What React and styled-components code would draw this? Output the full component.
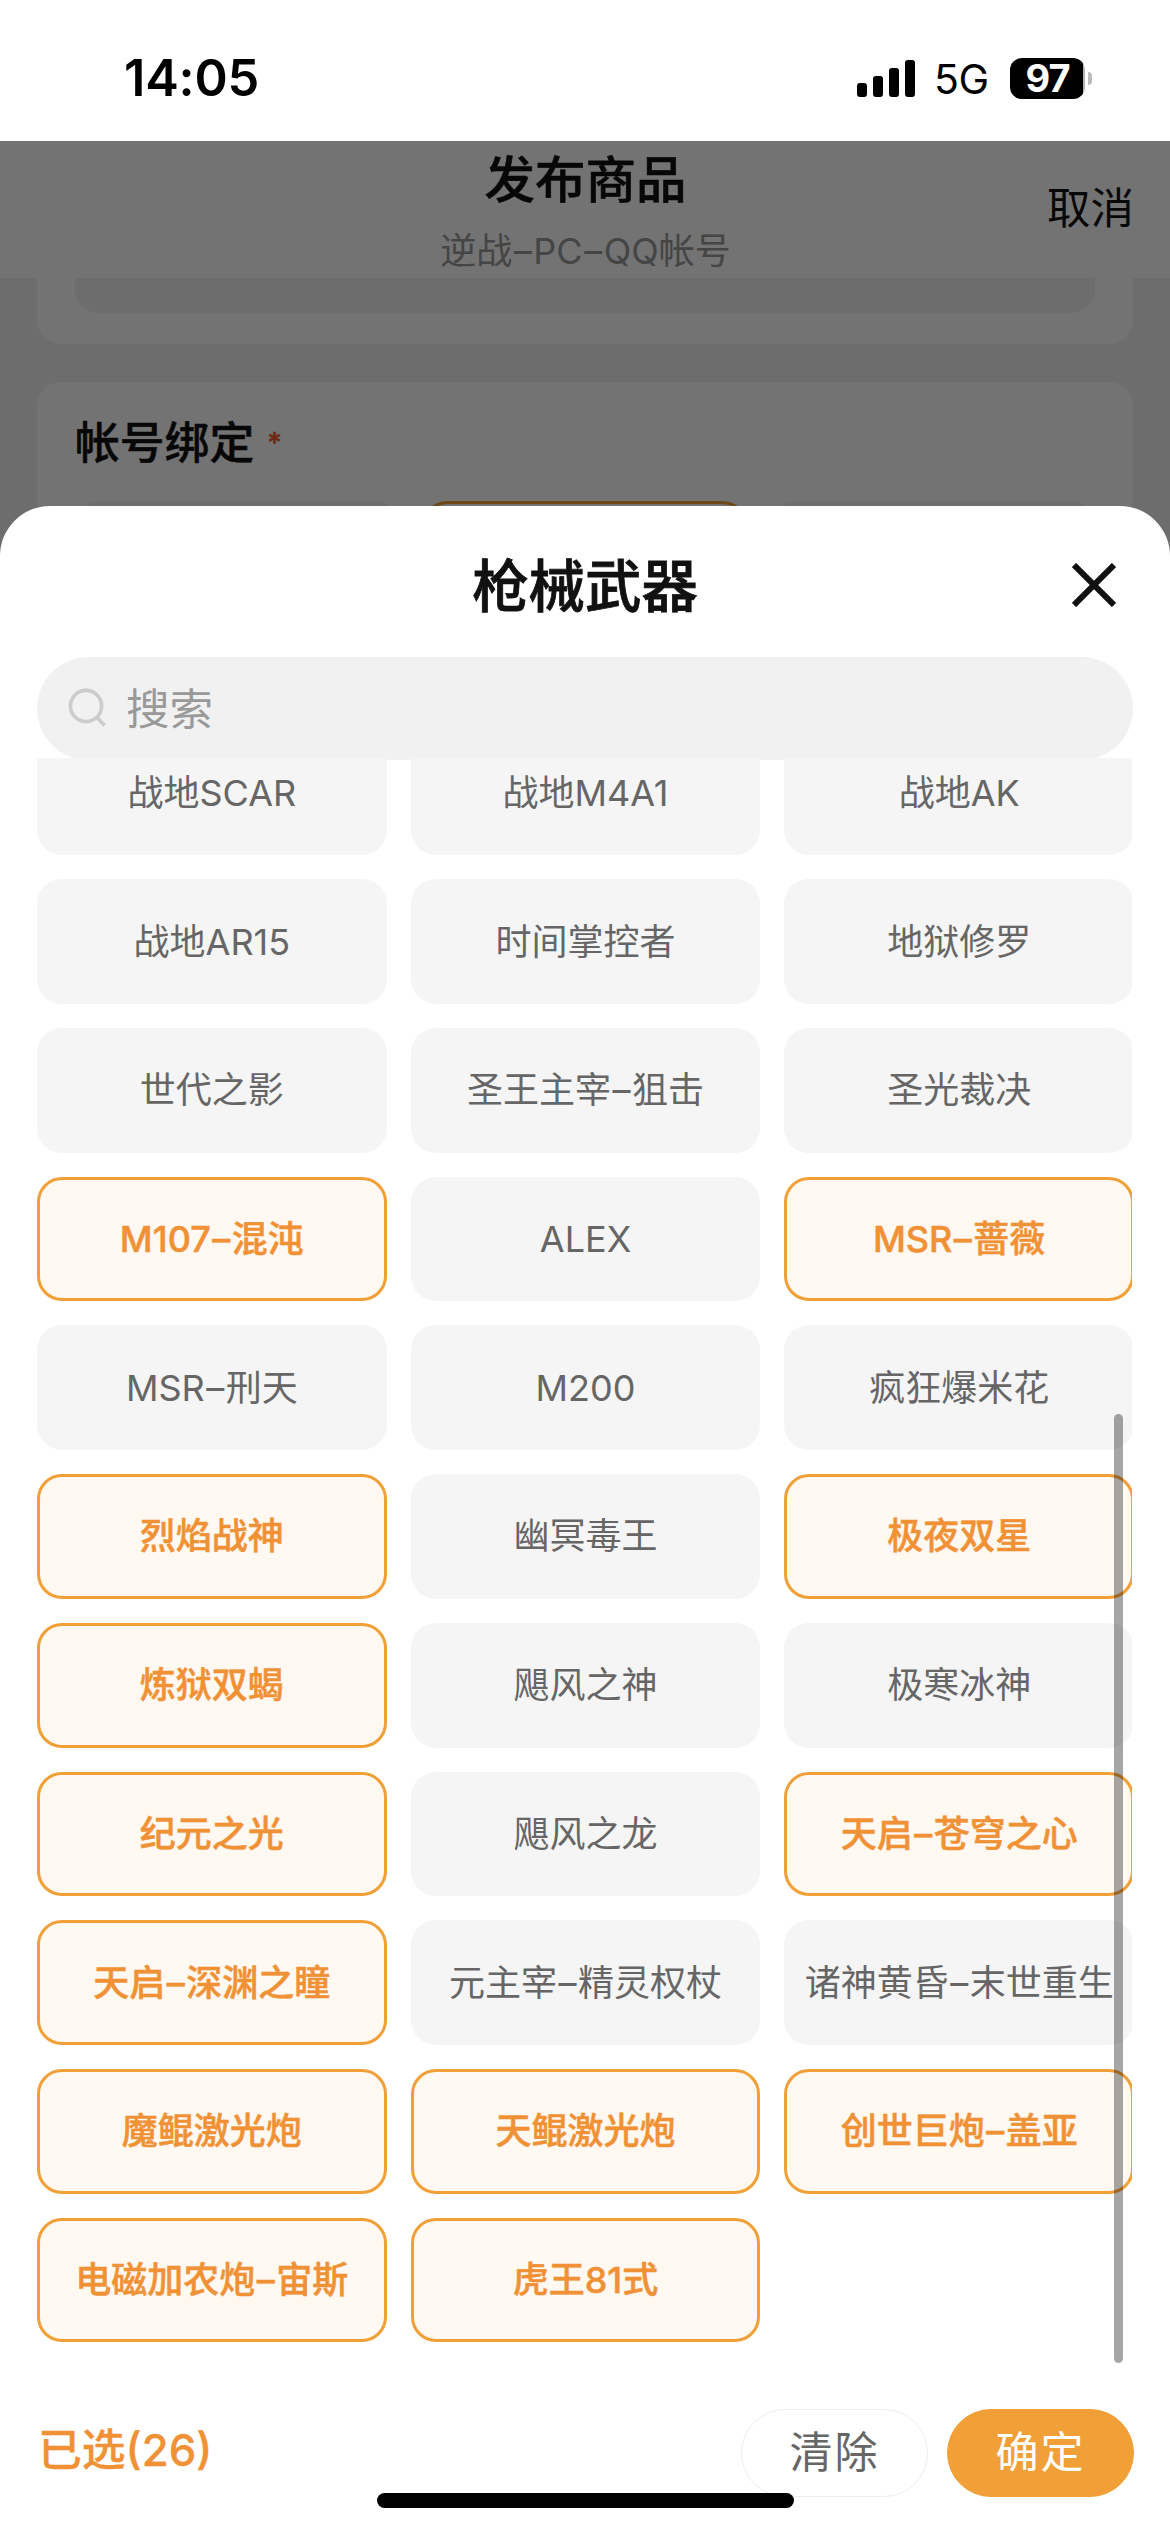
import React, { useState } from 'react';
import styled, { createGlobalStyle, css } from 'styled-components';

const GlobalStyle = createGlobalStyle`
  * { box-sizing: border-box; }
  html, body { margin: 0; padding: 0; background: #fff; }
  body { font-family: Inter, "Noto Sans CJK SC", sans-serif; }
  button { font: inherit; border: 0; background: none; padding: 0; }
`;

const stroke = (w) => css`-webkit-text-stroke: ${w}px currentColor;`;

const Phone = styled.div`
  position: relative;
  width: 1170px;
  height: 2532px;
  overflow: hidden;
  background: #fff;
  display: flex;
  flex-direction: column;
`;

const StatusBar = styled.header`
  flex: none;
  height: 141px;
  padding: 15px 78px 0 124px;
  display: flex;
  align-items: center;
  justify-content: space-between;
  color: #000;
`;

const Time = styled.span`
  font-size: 50.5px;
  font-weight: 600;
  letter-spacing: -0.2px;
  line-height: 60px;
`;

const StatusRight = styled.div`
  display: flex;
  align-items: center;
`;

const Network = styled.span`
  margin-left: 19px;
  width: 56px;
  font-size: 41px;
  line-height: 44px;
  letter-spacing: -0.5px;
  padding-top: 2px;
`;

const Battery = styled.span`
  margin-left: 20px;
  width: 75px;
  height: 41px;
  border-radius: 12px;
  background: linear-gradient(to right, #000 73px, #b3b3b3 73px);
  color: #fff;
  font-size: 38px;
  font-weight: 700;
  line-height: 41px;
  letter-spacing: -1px;
  text-align: center;
`;

const BatteryCap = styled.span`
  margin-left: 3px;
  width: 4px;
  height: 13px;
  border-radius: 0 4px 4px 0;
  background: #bbb;
`;

const Page = styled.main`
  position: relative;
  flex: 1;
  background: #f1f1f1;
`;

const PageHeader = styled.div`
  height: 137px;
  padding: 0 36px 0 37px;
  background: #fff;
  display: grid;
  grid-template-columns: 1fr auto 1fr;
  align-items: center;
`;

const Heading = styled.div`
  grid-column: 2;
  display: flex;
  flex-direction: column;
  align-items: center;
  padding-top: 3px;
`;

const PageTitle = styled.h1`
  margin: 0;
  font-size: 50.5px;
  font-weight: 500;
  line-height: 72px;
  color: #111;
  ${stroke(0.6)}
`;

const PageSubtitle = styled.span`
  font-size: 36px;
  line-height: 71px;
  height: 65px;
  color: #999;
`;

const Cancel = styled.button`
  justify-self: end;
  margin-top: -6px;
  font-size: 43.5px;
  line-height: 60px;
  color: #111;
`;

const Card = styled.section`
  margin: 0 37px 38px;
  padding: 0 38px 31px;
  background: #fff;
  border-radius: ${(p) => (p.$cut ? '0 0 24px 24px' : '24px')};
`;

const Field = styled.div`
  height: 35px;
  border-radius: 0 0 24px 24px;
  background: #f1f1f1;
`;

const CardTitle = styled.h2`
  margin: 0;
  height: 119px;
  padding-top: 2px;
  display: flex;
  align-items: center;
  font-size: 44.8px;
  line-height: 60px;
  font-weight: 500;
  color: #111;
  ${stroke(0.5)}
`;

const Required = styled.span`
  margin-left: 13px;
  font-size: 28px;
  color: #f2582b;
`;

const Options = styled.div`
  display: grid;
  grid-template-columns: repeat(3, 1fr);
  gap: 24px;
`;

const Option = styled.div`
  height: 125px;
  border-radius: 24px;
  background: ${(p) => (p.$on ? '#fff9f1' : '#f4f4f4')};
  border: 3px solid ${(p) => (p.$on ? '#f19f37' : 'transparent')};
`;

const Backdrop = styled.div`
  position: absolute;
  inset: 0;
  background: rgba(0, 0, 0, 0.55);
`;

const Sheet = styled.div`
  position: absolute;
  left: 0;
  right: 0;
  top: 506px;
  bottom: 0;
  display: flex;
  flex-direction: column;
  background: #fff;
  border-radius: 50px 50px 0 0;
`;

const SheetHeader = styled.div`
  flex: none;
  height: 151px;
  padding: 0 54px 0 37px;
  display: grid;
  grid-template-columns: 1fr auto 1fr;
  align-items: center;
`;

const SheetTitle = styled.h2`
  grid-column: 2;
  margin: 11px -17px 0 0;
  font-size: 56.4px;
  font-weight: 500;
  line-height: 80px;
  color: #111;
  ${stroke(0.8)}
`;

const Close = styled.button`
  justify-self: end;
  display: flex;
  margin-top: 6px;
`;

const Search = styled.label`
  flex: none;
  height: 103px;
  margin: 0 37px;
  padding: 0 31px 2px;
  border-radius: 52px;
  background: #f1f1f1;
  display: flex;
  align-items: center;
  gap: 20px;
  font-size: 43.5px;
  line-height: 60px;
  color: #999;
`;

const SearchText = styled.span`
  padding-top: 2px;
`;

const ListViewport = styled.div`
  position: relative;
  flex: none;
  height: 1607px;
  margin: -2px 38px 0 37px;
  overflow: hidden;
  display: flex;
  flex-direction: column;
`;

const Grid = styled.div`
  flex: none;
  width: 1097px;
  margin-top: -27.3px;
  display: grid;
  grid-template-columns: repeat(3, 1fr);
  grid-auto-rows: 124.7px;
  gap: 24px;
`;

const Chip = styled.button`
  border-radius: 25px;
  border: 3px solid ${(p) => (p.$on ? '#f19f37' : 'transparent')};
  background: ${(p) => (p.$on ? '#fff9f1' : '#f5f5f5')} border-box;
  color: ${(p) => (p.$on ? '#f19135' : '#666')};
  font-size: 36px;
  line-height: 44px;
  font-weight: ${(p) => (p.$on ? 500 : 400)};
  white-space: nowrap;
  display: flex;
  align-items: center;
  justify-content: center;
  ${(p) => p.$on && stroke(0.5)}
`;

const Dash = styled.span`
  margin: 0 1.5px;
`;

const Thumb = styled.div`
  position: absolute;
  right: 9px;
  top: 656px;
  width: 9px;
  height: 949px;
  border-radius: 5px;
  background: rgba(0, 0, 0, 0.35);
`;

const Footer = styled.footer`
  flex: none;
  margin-top: 44px;
  height: 88px;
  padding: 0 36px 0 38px;
  display: flex;
  align-items: center;
  gap: 19px;
`;

const Count = styled.span`
  flex: 1;
  padding-bottom: 4px;
  font-size: 43.8px;
  line-height: 60px;
  font-weight: 500;
  color: #f19135;
  ${stroke(0.3)}
`;

const Action = styled.button`
  width: 187px;
  height: 88px;
  padding-bottom: 3px;
  line-height: 60px;
  border-radius: 44px;
  border: 1px solid ${(p) => (p.$primary ? '#f19f37' : '#eee')};
  background: ${(p) => (p.$primary ? '#f19f37' : '#fff')};
  color: ${(p) => (p.$primary ? '#fff' : '#666')};
  font-size: 43px;
  letter-spacing: 2px;
`;

const HomeIndicator = styled.div`
  position: absolute;
  left: 377px;
  bottom: 24px;
  width: 417px;
  height: 15px;
  border-radius: 8px;
  background: #000;
`;

const WEAPONS = [
  ['战地SCAR'], ['战地M4A1'], ['战地AK'],
  ['战地AR15'], ['时间掌控者'], ['地狱修罗'],
  ['世代之影'], ['圣王主宰–狙击'], ['圣光裁决'],
  ['M107–混沌', 1], ['ALEX'], ['MSR–蔷薇', 1],
  ['MSR–刑天'], ['M200'], ['疯狂爆米花'],
  ['烈焰战神', 1], ['幽冥毒王'], ['极夜双星', 1],
  ['炼狱双蝎', 1], ['飓风之神'], ['极寒冰神'],
  ['纪元之光', 1], ['飓风之龙'], ['天启–苍穹之心', 1],
  ['天启–深渊之瞳', 1], ['元主宰–精灵权杖'], ['诸神黄昏–末世重生'],
  ['魔鲲激光炮', 1], ['天鲲激光炮', 1], ['创世巨炮–盖亚', 1],
  ['电磁加农炮–宙斯', 1], ['虎王81式', 1],
];

// Selections made in rows scrolled out of view above the list.
const SELECTED_ABOVE = 13;

function Label({ text }) {
  return (
    <span>
      {text.split('–').map((part, i) => (
        <React.Fragment key={i}>
          {i > 0 && <Dash>–</Dash>}
          {part}
        </React.Fragment>
      ))}
    </span>
  );
}

function Signal() {
  return (
    <svg width="58" height="37" viewBox="0 0 58 37">
      <rect x="0" y="23" width="10" height="14" rx="3" />
      <rect x="16" y="16" width="10" height="21" rx="3" />
      <rect x="32" y="8" width="10" height="29" rx="3" />
      <rect x="48" y="0" width="10" height="37" rx="3" />
    </svg>
  );
}

export default function App() {
  const [selected, setSelected] = useState(
    () => new Set(WEAPONS.filter((w) => w[1]).map((w) => w[0]))
  );
  const toggle = (name) =>
    setSelected((prev) => {
      const next = new Set(prev);
      if (!next.delete(name)) next.add(name);
      return next;
    });

  return (
    <Phone>
      <GlobalStyle />
      <StatusBar>
        <Time>14:05</Time>
        <StatusRight>
          <Signal />
          <Network>5G</Network>
          <Battery>97</Battery>
          <BatteryCap />
        </StatusRight>
      </StatusBar>
      <Page>
        <PageHeader>
          <Heading>
            <PageTitle>发布商品</PageTitle>
            <PageSubtitle>
              <Label text="逆战–PC–QQ帐号" />
            </PageSubtitle>
          </Heading>
          <Cancel>取消</Cancel>
        </PageHeader>
        <Card $cut>
          <Field />
        </Card>
        <Card>
          <CardTitle>
            帐号绑定<Required>*</Required>
          </CardTitle>
          <Options>
            <Option />
            <Option $on />
            <Option />
          </Options>
        </Card>
        <Backdrop />
      </Page>
      <Sheet>
        <SheetHeader>
          <SheetTitle>枪械武器</SheetTitle>
          <Close aria-label="关闭">
            <svg width="44" height="44" viewBox="0 0 44 44" stroke="#111" strokeWidth="6">
              <path d="M2 2 L42 42 M42 2 L2 42" />
            </svg>
          </Close>
        </SheetHeader>
        <Search>
          <svg width="38" height="40" viewBox="0 0 38 40" fill="none" stroke="#ccc" strokeWidth="3.6">
            <circle cx="18" cy="18" r="15.6" />
            <path d="M28.5 29 L36.5 37.5" />
          </svg>
          <SearchText>搜索</SearchText>
        </Search>
        <ListViewport>
          <Grid>
            {WEAPONS.map(([name]) => (
              <Chip key={name} $on={selected.has(name)} onClick={() => toggle(name)}>
                <Label text={name} />
              </Chip>
            ))}
          </Grid>
          <Thumb />
        </ListViewport>
        <Footer>
          <Count>{`已选(${SELECTED_ABOVE + selected.size})`}</Count>
          <Action>清除</Action>
          <Action $primary>确定</Action>
        </Footer>
      </Sheet>
      <HomeIndicator />
    </Phone>
  );
}
